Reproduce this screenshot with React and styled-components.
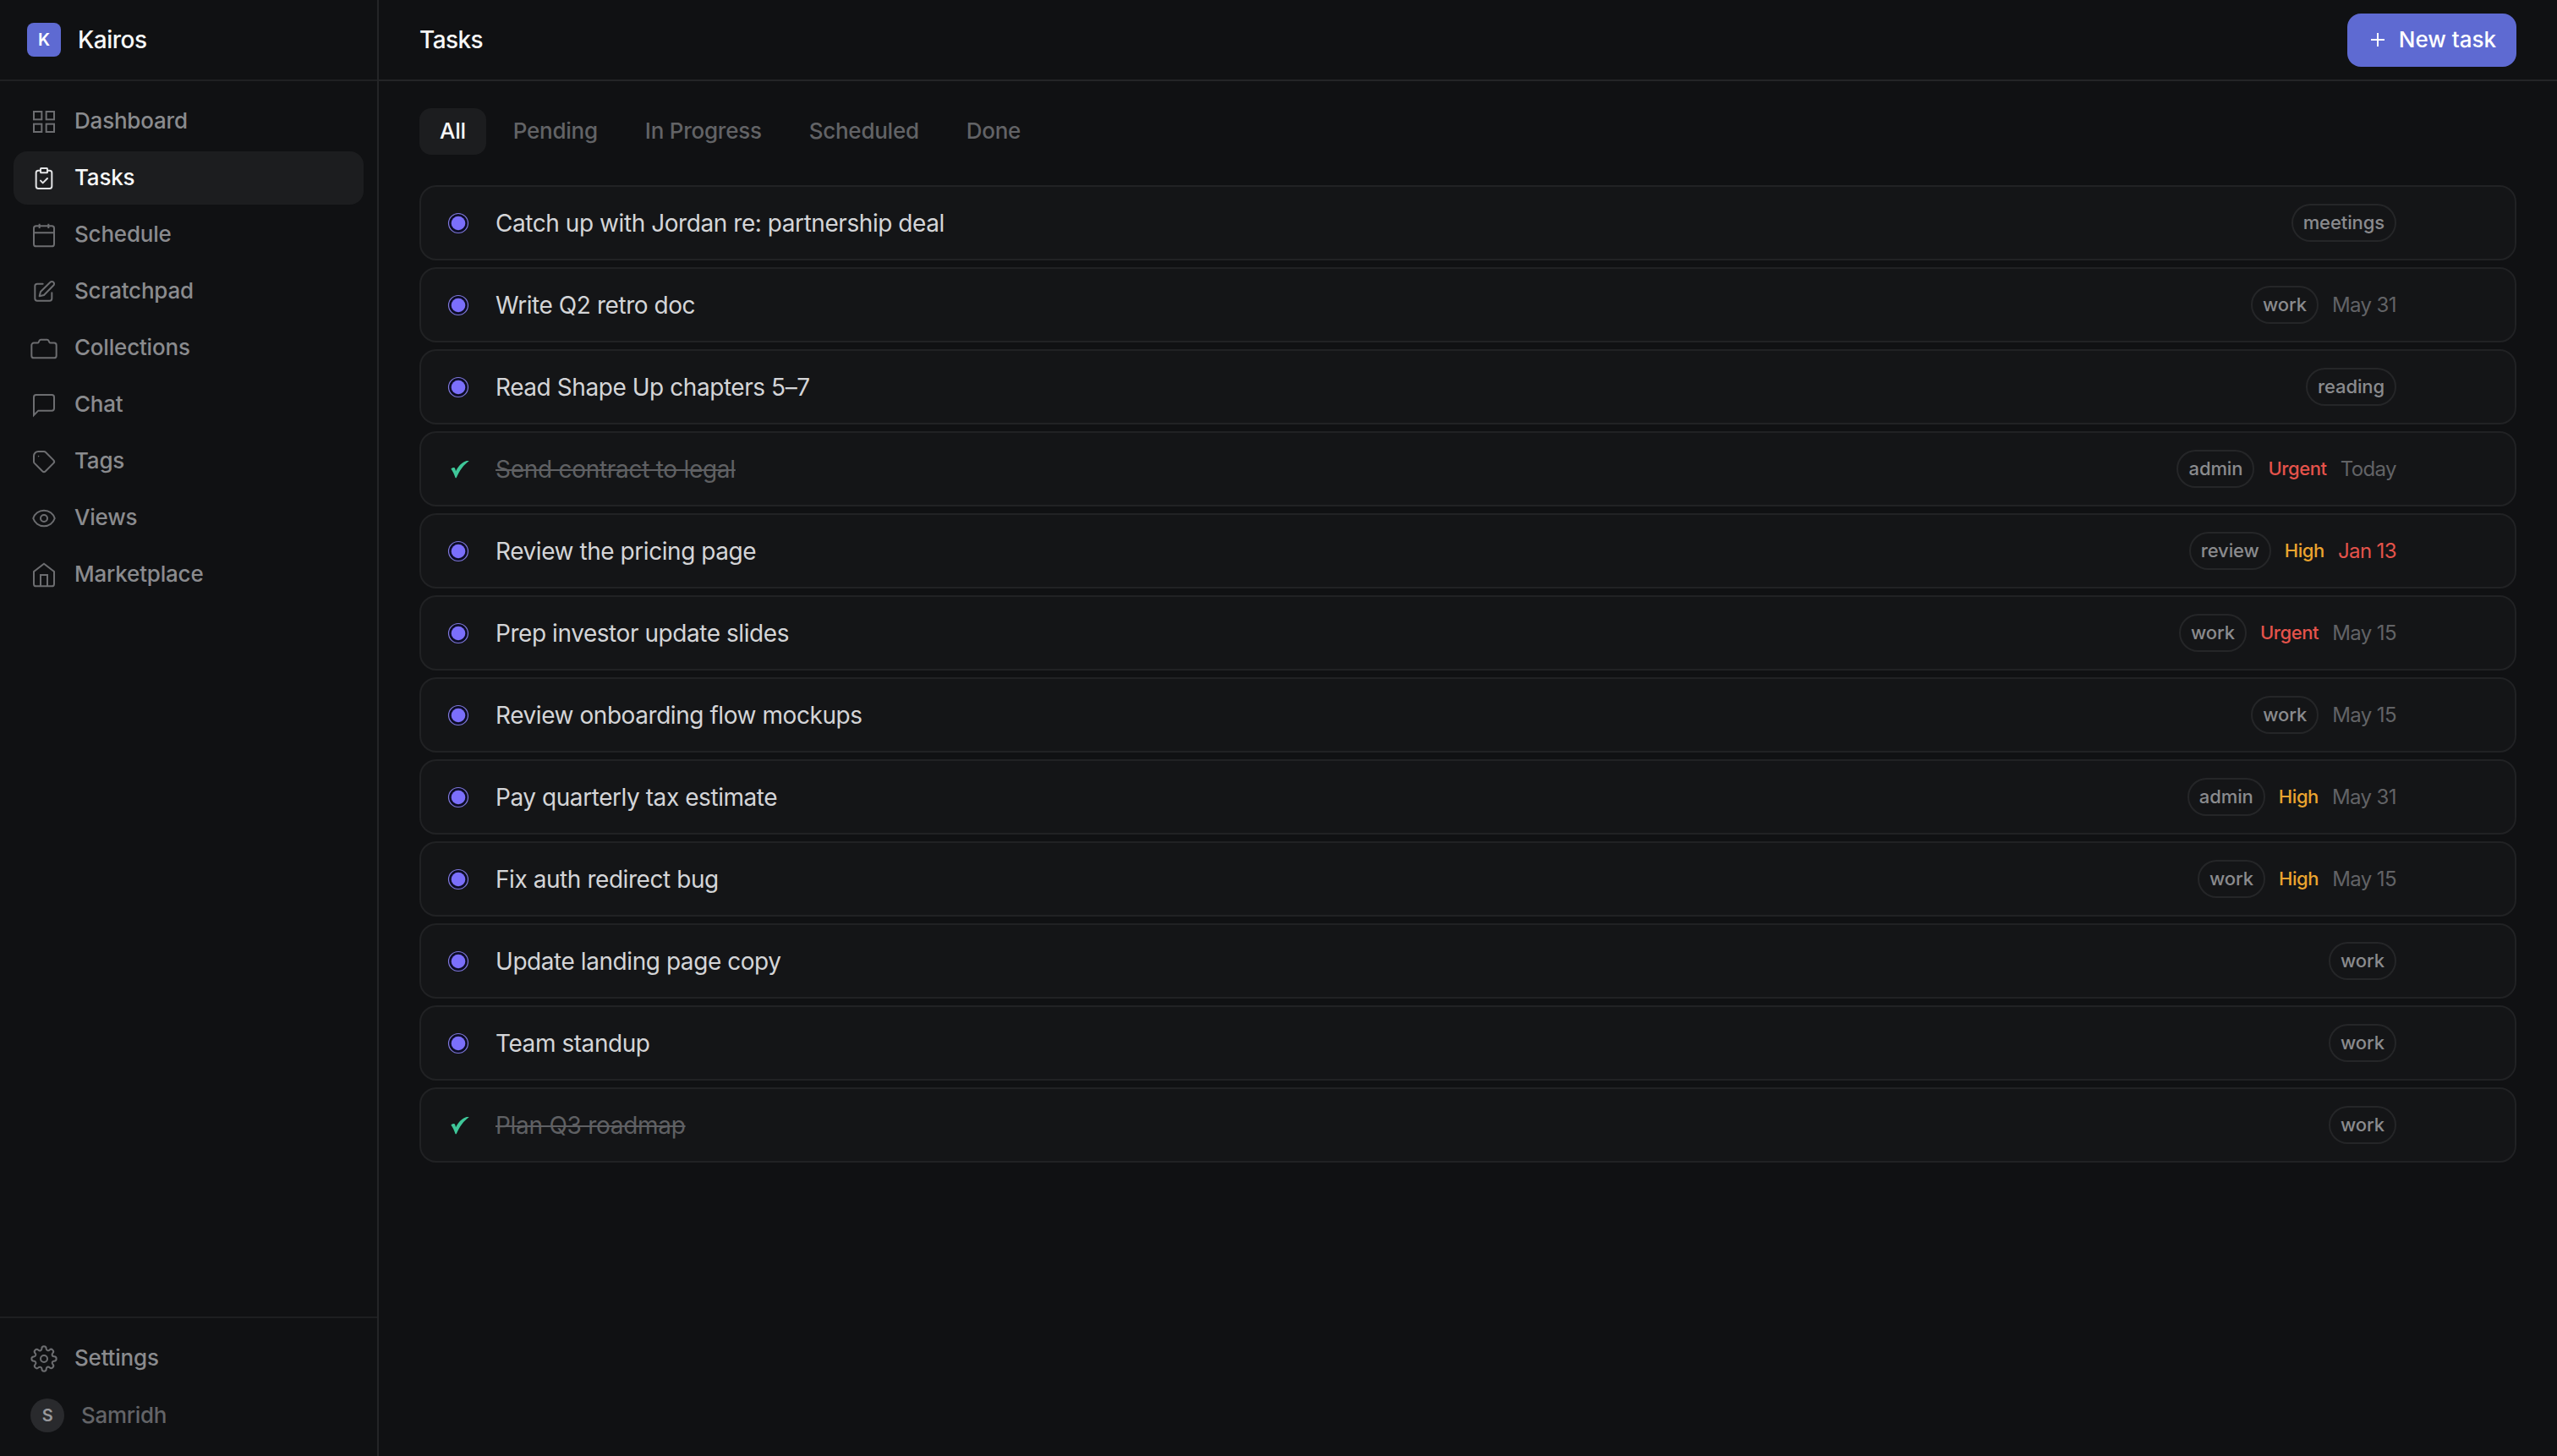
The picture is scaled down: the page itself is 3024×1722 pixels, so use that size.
import React from 'react';
import styled, { createGlobalStyle } from 'styled-components';

const GlobalStyle = createGlobalStyle`
  * {
    box-sizing: border-box;
  }

  body {
    margin: 0;
    background: #101113;
    font-family: Inter, 'Liberation Sans', sans-serif;
    -webkit-font-smoothing: antialiased;
  }
`;

const Page = styled.div`
  display: flex;
  width: 100%;
  height: 100vh;
  overflow: hidden;
  background: #101113;
`;

const Sidebar = styled.aside`
  display: flex;
  flex-direction: column;
  flex: none;
  width: 448px;
  border-right: 2px solid #242527;
`;

const Brand = styled.div`
  display: flex;
  align-items: center;
  gap: 20px;
  height: 96px;
  padding: 0 32px;
  border-bottom: 2px solid #202123;
  color: #f7f8f8;
  font-size: 28px;
  font-weight: 500;
  letter-spacing: -0.5px;
`;

const Logo = styled.span`
  display: flex;
  align-items: center;
  justify-content: center;
  width: 40px;
  height: 40px;
  border-radius: 8px;
  background: #5e6ad2;
  color: #fff;
  font-size: 20px;
  font-weight: 600;
  letter-spacing: 0;
`;

const Nav = styled.nav`
  display: flex;
  flex-direction: column;
  flex: 1;
  gap: 4px;
  padding: 16px;
`;

const NavItem = styled.a`
  display: flex;
  align-items: center;
  gap: 20px;
  height: 63px;
  padding: 0 20px;
  border-radius: 16px;
  background: ${props => (props.$active ? '#1c1d1f' : 'transparent')};
  color: ${props => (props.$active ? '#f7f8f8' : '#8a8b8e')};
  font-size: 26px;
  font-weight: 500;
  letter-spacing: -0.2px;

  svg {
    flex: none;
    color: ${props => (props.$active ? '#e2e3e5' : '#6c6d70')};
  }
`;

const Label = styled.span`
  margin-bottom: 2px;
`;

const Footer = styled.div`
  display: flex;
  flex-direction: column;
  gap: 4px;
  padding: 16px;
  border-top: 2px solid #1e1f21;
`;

const User = styled.div`
  display: flex;
  align-items: center;
  gap: 20px;
  height: 64px;
  padding: 0 20px;
  color: #636467;
  font-size: 26px;
  font-weight: 500;
  letter-spacing: -0.3px;
`;

const Avatar = styled.span`
  display: flex;
  align-items: center;
  justify-content: center;
  width: 40px;
  height: 40px;
  border-radius: 50%;
  background: #292a2d;
  color: #98999c;
  font-size: 20px;
  font-weight: 600;
`;

const Main = styled.main`
  flex: 1;
  min-width: 0;
`;

const Header = styled.header`
  display: flex;
  align-items: center;
  justify-content: space-between;
  height: 96px;
  padding: 0 48px;
  border-bottom: 2px solid #242527;
`;

const Title = styled.h1`
  margin: 0;
  color: #f7f8f8;
  font-size: 28px;
  font-weight: 500;
  letter-spacing: -0.6px;
`;

const NewButton = styled.button`
  display: flex;
  align-items: center;
  justify-content: space-between;
  width: 200px;
  height: 63px;
  padding: 0 24px 0 28px;
  border: 0;
  border-radius: 16px;
  background: #5e6ad2;
  color: #fff;
  font-family: inherit;
  font-size: 26px;
  font-weight: 500;
`;

const Content = styled.div`
  padding: 32px 48px;
`;

const Tabs = styled.div`
  display: flex;
  gap: 8px;
  margin-bottom: 36px;
`;

const Tab = styled.span`
  display: flex;
  align-items: center;
  height: 55px;
  padding: 0 24px 2px;
  border-radius: 14px;
  background: ${props => (props.$active ? '#1c1d1f' : 'transparent')};
  color: ${props => (props.$active ? '#f7f8f8' : '#626366')};
  font-size: 26px;
  font-weight: 500;
  letter-spacing: -0.25px;
`;

const List = styled.div`
  display: flex;
  flex-direction: column;
  gap: 8px;
`;

const Card = styled.div`
  display: flex;
  align-items: center;
  height: 89px;
  padding: 0 140px 0 30px;
  border: 2px solid #212224;
  border-radius: 20px;
  background: #141517;
`;

const Status = styled.span`
  display: flex;
  width: 28px;
  height: 28px;
  margin-right: 30px;
`;

const TaskName = styled.span`
  color: ${props => (props.$done ? '#5f6063' : '#d4d5d8')};
  font-size: 28px;
  letter-spacing: ${props => (props.$done ? '-0.28px' : '-0.44px')};
  text-decoration: ${props => (props.$done ? 'line-through' : 'none')};
`;

const Meta = styled.div`
  display: flex;
  align-items: center;
  gap: 16px;
  margin-left: auto;
`;

const Tag = styled.span`
  display: flex;
  align-items: center;
  height: 45px;
  padding: 0 12px 2px;
  border: 2px solid #252628;
  border-radius: 23px;
  color: #8a8b8e;
  font-size: 22px;
  font-weight: 500;
  letter-spacing: -0.1px;
`;

const Priority = styled.span`
  margin-bottom: 2px;
  color: ${props => (props.$level === 'Urgent' ? '#e5534b' : '#eba42f')};
  font-size: 22px;
  font-weight: 500;
  letter-spacing: -0.4px;
`;

const Due = styled.span`
  color: ${props => (props.$overdue ? '#e5534b' : '#626366')};
  font-size: 24px;
  letter-spacing: -0.6px;
`;

const Icon = ({ children, round }) => (
  <svg
    width="32"
    height="32"
    viewBox="0 0 24 24"
    fill="none"
    stroke="currentColor"
    strokeWidth="1.5"
    strokeLinecap={round ? 'round' : 'butt'}
    strokeLinejoin={round ? 'round' : 'miter'}
  >
    {children}
  </svg>
);

const icons = {
  dashboard: (
    <Icon>
      <rect x="3" y="3" width="7" height="7" />
      <rect x="14" y="3" width="7" height="7" />
      <rect x="3" y="14" width="7" height="7" />
      <rect x="14" y="14" width="7" height="7" />
    </Icon>
  ),
  tasks: (
    <Icon round>
      <path d="M9 5H7a2 2 0 0 0-2 2v12a2 2 0 0 0 2 2h10a2 2 0 0 0 2-2V7a2 2 0 0 0-2-2h-2" />
      <rect x="9" y="3" width="6" height="4" rx="0.5" />
      <path d="M9 14l2 2 4-4" />
    </Icon>
  ),
  schedule: (
    <Icon>
      <rect x="3" y="4" width="18" height="18" rx="2" />
      <path d="M16 2v4M8 2v4M3 10h18" />
    </Icon>
  ),
  scratchpad: (
    <Icon round>
      <path d="M11 5H6a2 2 0 0 0-2 2v11a2 2 0 0 0 2 2h11a2 2 0 0 0 2-2v-5" />
      <path d="M17.586 3.586a2 2 0 1 1 2.828 2.828L12 15l-4 1 1-4 8.586-8.414z" />
    </Icon>
  ),
  collections: (
    <Icon>
      <path d="M23 18.5a2 2 0 0 1-2 2H3a2 2 0 0 1-2-2V9.2a2 2 0 0 1 2-2h3.2a1.2 1.2 0 0 0 1.1-.7l.6-1.3a1.4 1.4 0 0 1 1.3-.8h5.6a1.4 1.4 0 0 1 1.3.8l.6 1.3a1.2 1.2 0 0 0 1.1.7H21a2 2 0 0 1 2 2z" />
    </Icon>
  ),
  chat: (
    <Icon>
      <path d="M21 15a2 2 0 0 1-2 2H7l-4 4V5a2 2 0 0 1 2-2h14a2 2 0 0 1 2 2z" />
    </Icon>
  ),
  tags: (
    <Icon>
      <path d="M7 3h5c.512 0 1.024.195 1.414.586l7 7a2 2 0 0 1 0 2.828l-7 7a2 2 0 0 1-2.828 0l-7-7A1.994 1.994 0 0 1 3 12V7a4 4 0 0 1 4-4z" />
      <circle cx="7.2" cy="7.2" r="0.6" fill="currentColor" stroke="none" />
    </Icon>
  ),
  views: (
    <Icon>
      <path d="M2.458 12C3.732 7.943 7.523 5 12 5c4.478 0 8.268 2.943 9.542 7-1.274 4.057-5.064 7-9.542 7-4.477 0-8.268-2.943-9.542-7z" />
      <circle cx="12" cy="12" r="3" />
    </Icon>
  ),
  marketplace: (
    <Icon>
      <path d="M3 9l9-7 9 7v11a2 2 0 0 1-2 2H5a2 2 0 0 1-2-2z" />
      <path d="M9 22V12h6v10" />
    </Icon>
  ),
  settings: (
    <Icon>
      <circle cx="12" cy="12" r="3" />
      <path d="M19.4 15a1.65 1.65 0 0 0 .33 1.82l.06.06a2 2 0 0 1-2.83 2.83l-.06-.06a1.65 1.65 0 0 0-1.82-.33 1.65 1.65 0 0 0-1 1.51V21a2 2 0 0 1-4 0v-.09A1.65 1.65 0 0 0 9 19.4a1.65 1.65 0 0 0-1.82.33l-.06.06a2 2 0 0 1-2.83-2.83l.06-.06a1.65 1.65 0 0 0 .33-1.82 1.65 1.65 0 0 0-1.51-1H3a2 2 0 0 1 0-4h.09A1.65 1.65 0 0 0 4.6 9a1.65 1.65 0 0 0-.33-1.82l-.06-.06a2 2 0 0 1 2.83-2.83l.06.06a1.65 1.65 0 0 0 1.82.33H9a1.65 1.65 0 0 0 1-1.51V3a2 2 0 0 1 4 0v.09a1.65 1.65 0 0 0 1 1.51 1.65 1.65 0 0 0 1.82-.33l.06-.06a2 2 0 0 1 2.83 2.83l-.06.06a1.65 1.65 0 0 0-.33 1.82V9a1.65 1.65 0 0 0 1.51 1H21a2 2 0 0 1 0 4h-.09a1.65 1.65 0 0 0-1.51 1z" />
    </Icon>
  ),
};

const OpenMark = () => (
  <svg width="28" height="28" viewBox="0 0 28 28">
    <circle cx="14" cy="14" r="11.5" fill="#0c0c26" stroke="#7f78dc" strokeWidth="1.2" />
    <circle cx="14" cy="14" r="8.3" fill="#7b6ffb" />
  </svg>
);

const DoneMark = () => (
  <svg width="28" height="28" viewBox="0 0 28 28">
    <path
      d="M5.4 13.6C7 12.2 8.8 11.6 9.8 12.6C10.4 13.3 10.7 14.6 11 16.2C13.8 10.5 18 6 22.600 4.400C24 3.900 25.600 3.900 26.700 4.300C20.500 8.500 15.500 15.500 11.900 23.800C11.500 24.500 10.800 24.500 10.400 23.800C9.400 21 7.600 16.400 5.400 13.600z"
      fill="#3fc799"
    />
  </svg>
);

const navItems = [
  { label: 'Dashboard', icon: 'dashboard' },
  { label: 'Tasks', icon: 'tasks', active: true },
  { label: 'Schedule', icon: 'schedule' },
  { label: 'Scratchpad', icon: 'scratchpad' },
  { label: 'Collections', icon: 'collections' },
  { label: 'Chat', icon: 'chat' },
  { label: 'Tags', icon: 'tags' },
  { label: 'Views', icon: 'views' },
  { label: 'Marketplace', icon: 'marketplace' },
];

const tabs = ['All', 'Pending', 'In Progress', 'Scheduled', 'Done'];

const tasks = [
  { name: 'Catch up with Jordan re: partnership deal', tag: 'meetings' },
  { name: 'Write Q2 retro doc', tag: 'work', due: 'May 31' },
  { name: 'Read Shape Up chapters 5–7', tag: 'reading' },
  { name: 'Send contract to legal', tag: 'admin', priority: 'Urgent', due: 'Today', done: true },
  { name: 'Review the pricing page', tag: 'review', priority: 'High', due: 'Jan 13', overdue: true },
  { name: 'Prep investor update slides', tag: 'work', priority: 'Urgent', due: 'May 15' },
  { name: 'Review onboarding flow mockups', tag: 'work', due: 'May 15' },
  { name: 'Pay quarterly tax estimate', tag: 'admin', priority: 'High', due: 'May 31' },
  { name: 'Fix auth redirect bug', tag: 'work', priority: 'High', due: 'May 15' },
  { name: 'Update landing page copy', tag: 'work' },
  { name: 'Team standup', tag: 'work' },
  { name: 'Plan Q3 roadmap', tag: 'work', done: true },
];

const App = () => (
  <Page>
    <GlobalStyle />
    <Sidebar>
      <Brand>
        <Logo>K</Logo>
        Kairos
      </Brand>
      <Nav>
        {navItems.map(item => (
          <NavItem key={item.label} $active={item.active}>
            {icons[item.icon]}
            <Label>{item.label}</Label>
          </NavItem>
        ))}
      </Nav>
      <Footer>
        <NavItem>
          {icons.settings}
          <Label>Settings</Label>
        </NavItem>
        <User>
          <Avatar>S</Avatar>
          <Label>Samridh</Label>
        </User>
      </Footer>
    </Sidebar>
    <Main>
      <Header>
        <Title>Tasks</Title>
        <NewButton>
          <svg width="16" height="16" viewBox="0 0 16 16" stroke="currentColor" strokeWidth="2">
            <path d="M8 0v16M0 8h16" />
          </svg>
          <Label>New task</Label>
        </NewButton>
      </Header>
      <Content>
        <Tabs>
          {tabs.map((tab, i) => (
            <Tab key={tab} $active={i === 0}>
              {tab}
            </Tab>
          ))}
        </Tabs>
        <List>
          {tasks.map(task => (
            <Card key={task.name}>
              <Status>{task.done ? <DoneMark /> : <OpenMark />}</Status>
              <TaskName $done={task.done}>{task.name}</TaskName>
              <Meta>
                <Tag>{task.tag}</Tag>
                {task.priority && <Priority $level={task.priority}>{task.priority}</Priority>}
                {task.due && <Due $overdue={task.overdue}>{task.due}</Due>}
              </Meta>
            </Card>
          ))}
        </List>
      </Content>
    </Main>
  </Page>
);

export default App;
